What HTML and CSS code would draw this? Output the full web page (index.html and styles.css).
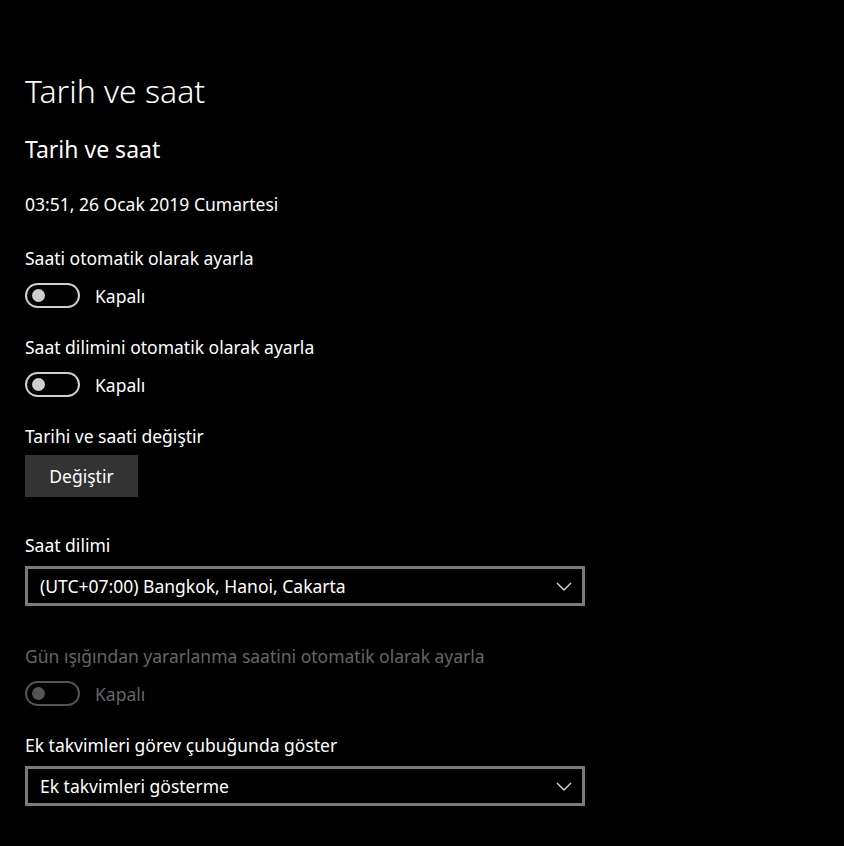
FILE: index.html
```html
<!DOCTYPE html>
<html lang="tr">
<head>
<meta charset="utf-8">
<title>Tarih ve saat</title>
<link rel="stylesheet" href="styles.css">
</head>
<body>
<main class="page">
  <h1 class="title">Tarih ve saat</h1>
  <h2 class="subtitle">Tarih ve saat</h2>
  <p class="now">03:51, 26 Ocak 2019 Cumartesi</p>

  <section class="setting first">
    <div class="label">Saati otomatik olarak ayarla</div>
    <div class="toggle-row">
      <span class="toggle"><span class="knob"></span></span>
      <span class="state">Kapalı</span>
    </div>
  </section>

  <section class="setting">
    <div class="label">Saat dilimini otomatik olarak ayarla</div>
    <div class="toggle-row">
      <span class="toggle"><span class="knob"></span></span>
      <span class="state">Kapalı</span>
    </div>
  </section>

  <section class="setting">
    <div class="label">Tarihi ve saati değiştir</div>
    <button class="btn">Değiştir</button>
  </section>

  <section class="setting setting-wide">
    <div class="label">Saat dilimi</div>
    <div class="select">
      <span class="select-text">(UTC+07:00) Bangkok, Hanoi, Cakarta</span>
      <svg class="chev" width="16" height="9" viewBox="0 0 16 9"><path d="M1 1 L8 8 L15 1" fill="none" stroke="#d8d8d8" stroke-width="1.4"/></svg>
    </div>
  </section>

  <section class="setting setting-after-select disabled">
    <div class="label">Gün ışığından yararlanma saatini otomatik olarak ayarla</div>
    <div class="toggle-row">
      <span class="toggle"><span class="knob"></span></span>
      <span class="state">Kapalı</span>
    </div>
  </section>

  <section class="setting">
    <div class="label">Ek takvimleri görev çubuğunda göster</div>
    <div class="select">
      <span class="select-text">Ek takvimleri gösterme</span>
      <svg class="chev" width="16" height="9" viewBox="0 0 16 9"><path d="M1 1 L8 8 L15 1" fill="none" stroke="#d8d8d8" stroke-width="1.4"/></svg>
    </div>
  </section>
</main>
</body>
</html>
```
FILE: styles.css
```css
html, body {
  margin: 0;
  padding: 0;
  background: #000;
  color: #fff;
  font-family: "Noto Sans", "Open Sans", sans-serif;
}

.page {
  padding: 71px 0 0 25px;
  display: flex;
  flex-direction: column;
  align-items: flex-start;
}

.title {
  margin: 0;
  font-size: 32px;
  font-weight: 300;
  line-height: 40px;
}

.subtitle {
  margin: 23px 0 0;
  font-size: 23px;
  font-weight: 400;
  line-height: 30px;
}

.now {
  margin: 28px 0 0;
  font-size: 17.5px;
  line-height: 24px;
}

.setting {
  margin-top: 27px;
  display: flex;
  flex-direction: column;
  align-items: flex-start;
}

.setting.first {
  margin-top: 30px;
}

.setting-wide {
  margin-top: 36px;
}

.setting-after-select {
  margin-top: 38px;
}

.label {
  font-size: 17.5px;
  line-height: 24px;
  color: #fff;
}

.toggle-row {
  margin-top: 13px;
  display: flex;
  align-items: center;
  height: 25px;
}

.toggle {
  box-sizing: border-box;
  width: 55px;
  height: 25px;
  border: 2px solid #cfcfcf;
  border-radius: 13px;
  display: flex;
  align-items: center;
  padding-left: 5px;
}

.knob {
  width: 13px;
  height: 13px;
  border-radius: 50%;
  background: #cfcfcf;
}

.state {
  margin-left: 15px;
  font-size: 17.5px;
  line-height: 24px;
}

.btn {
  margin-top: 7px;
  width: 113px;
  height: 42px;
  border: none;
  background: #333;
  color: #fff;
  font-family: inherit;
  font-size: 17.5px;
  padding: 0;
}

.select {
  margin-top: 9px;
  box-sizing: border-box;
  width: 560px;
  height: 40px;
  border: 3px solid #7a7a7a;
  display: flex;
  align-items: center;
  justify-content: space-between;
  padding: 0 10px 0 12px;
}

.select-text {
  font-size: 17.5px;
  line-height: 24px;
}

.disabled .label,
.disabled .state {
  color: #666;
}

.disabled .toggle {
  border-color: #555;
}

.disabled .knob {
  background: #555;
}
```
